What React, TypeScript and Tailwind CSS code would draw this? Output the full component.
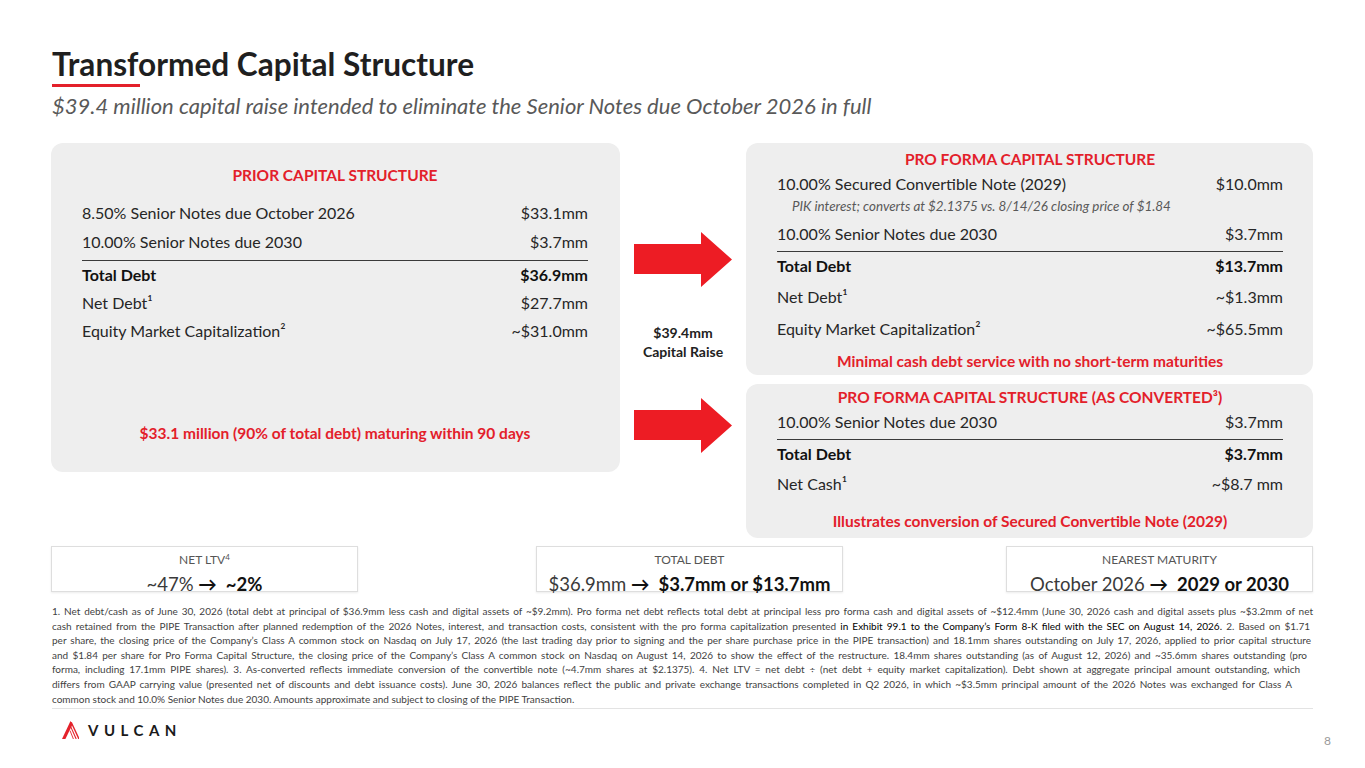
import React from 'react'

const RED = 'text-[#e3202a]'

function Arrow() {
  return (
    <svg width="98" height="55" viewBox="0 0 98 55" className="block">
      <polygon points="0,12 67,12 67,0 98,27.5 67,55 67,42 0,42" fill="#ed1c24" />
    </svg>
  )
}

function Row({ label, value, h, bold }: { label: React.ReactNode; value: string; h: string; bold?: boolean }) {
  return (
    <div className={`flex items-center justify-between ${h} ${bold ? 'font-bold text-[#111]' : 'text-[#262626]'}`}>
      <span>{label}</span>
      <span>{value}</span>
    </div>
  )
}

function Divider() {
  return <div className="mt-[4px] border-t-[1.5px] border-[#3a3a3a]" />
}

function StatBox({ label, from, to, className = '' }: { label: React.ReactNode; from: string; to: string; className?: string }) {
  return (
    <div className={`w-[307px] h-[46px] border border-[#dedede] bg-white shadow-[0_1px_2px_rgba(0,0,0,0.08)] pt-[5px] text-center ${className}`}>
      <div className="text-[12px] leading-[15px] text-[#555]">{label}</div>
      <div className="mt-[6px] text-[18.5px] leading-[22px] text-[#3a3a3a]">
        {from} <span className="font-bold text-[#111]">&rarr;&nbsp; {to}</span>
      </div>
    </div>
  )
}

function Logo() {
  return (
    <div className="flex items-center gap-[9px] pl-[10px] h-[18px]">
      <svg width="17" height="18" viewBox="0 0 17 18">
        <polygon points="8.5,0 10.5,3.4 3.4,18 0,18" fill="#e4222b" />
        <line x1="9.2" y1="1.2" x2="17" y2="18" stroke="#e4222b" strokeWidth="1.4" />
        <line x1="8.6" y1="5.4" x2="14.2" y2="18" stroke="#e4222b" strokeWidth="1.1" />
        <line x1="8" y1="9.6" x2="11.4" y2="18" stroke="#e4222b" strokeWidth="0.9" />
      </svg>
      <span className="text-[15px] font-bold tracking-[5.5px] text-[#1a1a1a] leading-[18px]">VULCAN</span>
    </div>
  )
}

export default function App() {
  return (
    <div className="w-[1365px] h-[768px] overflow-hidden bg-white px-[52px] pt-[46px] font-[family-name:Lato,sans-serif]">
      {/* title */}
      <h1 className="text-[31.6px] leading-[36px] font-bold text-[#1f1f1f]">Transformed Capital Structure</h1>
      <div className="mt-[2px] h-[3px] w-[88px] bg-[#e3202a]" />
      <p className="mt-[6px] text-[22px] leading-[26px] italic text-[#595959]">
        $39.4 million capital raise intended to eliminate the Senior Notes due October 2026 in full
      </p>

      {/* panels */}
      <div className="mt-[24px] -ml-[1px] flex h-[395px] text-[16px]">
        <div className="w-[569px] h-[329px] rounded-xl bg-[#eeeeee] pl-[31px] pr-[32px] pt-[20px] flex flex-col">
          <div className={`h-[24px] leading-[24px] text-center font-bold text-[15.5px] ${RED}`}>PRIOR CAPITAL STRUCTURE</div>
          <div className="mt-[11px]">
            <Row h="h-[29px]" label="8.50% Senior Notes due October 2026" value="$33.1mm" />
            <Row h="h-[29px]" label="10.00% Senior Notes due 2030" value="$3.7mm" />
          </div>
          <Divider />
          <Row h="h-[28px]" bold label="Total Debt" value="$36.9mm" />
          <Row h="h-[28px]" label="Net Debt¹" value="$27.7mm" />
          <Row h="h-[28px]" label="Equity Market Capitalization²" value="~$31.0mm" />
          <div className={`mt-auto mb-[29px] leading-[20px] text-center font-bold text-[15.5px] ${RED}`}>
            $33.1 million (90% of total debt) maturing within 90 days
          </div>
        </div>

        <div className="w-[126px] flex flex-col items-center pt-[89px]">
          <Arrow />
          <div className="mt-[36px] text-center text-[14px] leading-[19px] font-bold text-[#222]">
            <div>$39.4mm</div>
            <div>Capital Raise</div>
          </div>
          <div className="mt-[37px]">
            <Arrow />
          </div>
        </div>

        <div className="w-[567px] flex flex-col gap-[9px]">
          <div className="h-[232px] rounded-xl bg-[#eeeeee] pl-[31px] pr-[30px] pt-[4px] flex flex-col">
            <div className={`h-[24px] leading-[24px] text-center font-bold text-[15.5px] ${RED}`}>PRO FORMA CAPITAL STRUCTURE</div>
            <Row h="h-[26px]" label="10.00% Secured Convertible Note (2029)" value="$10.0mm" />
            <div className="h-[18px] leading-[18px] pl-[15px] italic text-[13.4px] text-[#595959]">
              PIK interest; converts at $2.1375 vs. 8/14/26 closing price of $1.84
            </div>
            <div className="mt-[6px]">
              <Row h="h-[26px]" label="10.00% Senior Notes due 2030" value="$3.7mm" />
            </div>
            <Divider />
            <Row h="h-[28px]" bold label="Total Debt" value="$13.7mm" />
            <Row h="h-[33px]" label="Net Debt¹" value="~$1.3mm" />
            <Row h="h-[32px]" label="Equity Market Capitalization²" value="~$65.5mm" />
            <div className={`mt-[6px] leading-[20px] text-center font-bold text-[15.5px] ${RED}`}>
              Minimal cash debt service with no short-term maturities
            </div>
          </div>

          <div className="h-[154px] rounded-xl bg-[#eeeeee] pl-[31px] pr-[30px] pt-[1px] flex flex-col">
            <div className={`h-[24px] leading-[24px] text-center font-bold text-[15.5px] ${RED}`}>
              PRO FORMA CAPITAL STRUCTURE (AS CONVERTED³)
            </div>
            <Row h="h-[26px]" label="10.00% Senior Notes due 2030" value="$3.7mm" />
            <Divider />
            <Row h="h-[28px]" bold label="Total Debt" value="$3.7mm" />
            <Row h="h-[32px]" label="Net Cash¹" value="~$8.7 mm" />
            <div className={`mt-[11px] leading-[20px] text-center font-bold text-[15.5px] ${RED}`}>
              Illustrates conversion of Secured Convertible Note (2029)
            </div>
          </div>
        </div>
      </div>

      {/* stats */}
      <div className="mt-[8px] -ml-[1px] flex">
        <StatBox
          label={<>NET LTV<sup className="text-[8px]">4</sup></>}
          from="~47%"
          to="~2%"
        />
        <StatBox className="ml-[178px]" label="TOTAL DEBT" from="$36.9mm" to="$3.7mm or $13.7mm" />
        <StatBox className="ml-[163px]" label="NEAREST MATURITY" from="October 2026" to="2029 or 2030" />
      </div>

      {/* footnotes */}
      <div className="mt-[12px] text-[10px] leading-[14.6px] text-[#3f3f3f]">
        <div className="w-[1261px] text-justify [text-align-last:justify]">
          1. Net debt/cash as of June 30, 2026 (total debt at principal of $36.9mm less cash and digital assets of ~$9.2mm). Pro forma net debt reflects total debt at principal less pro forma cash and digital assets of ~$12.4mm (June 30, 2026 cash and digital assets plus ~$3.2mm of net
        </div>
        <div className="w-[1258px] text-justify [text-align-last:justify]">
          cash retained from the PIPE Transaction after planned redemption of the 2026 Notes, interest, and transaction costs, consistent with the pro forma capitalization presented{' '}
          <span className="text-black">in Exhibit 99.1 to the Company’s Form 8-K filed with the SEC on August 14, 2026.</span>
          {'  '}2. Based on $1.71
        </div>
        <div className="w-[1259px] text-justify [text-align-last:justify]">
          per share, the closing price of the Company’s Class A common stock on Nasdaq on July 17, 2026 (the last trading day prior to signing and the per share purchase price in the PIPE transaction) and 18.1mm shares outstanding on July 17, 2026, applied to prior capital structure
        </div>
        <div className="w-[1255px] text-justify [text-align-last:justify]">
          and $1.84 per share for Pro Forma Capital Structure, the closing price of the Company’s Class A common stock on Nasdaq on August 14, 2026 to show the effect of the restructure. 18.4mm shares outstanding (as of August 12, 2026) and ~35.6mm shares outstanding (pro
        </div>
        <div className="w-[1248px] text-justify [text-align-last:justify]">
          forma, including 17.1mm PIPE shares). 3. As-converted reflects immediate conversion of the convertible note (~4.7mm shares at $2.1375). 4. Net LTV = net debt ÷ (net debt + equity market capitalization). Debt shown at aggregate principal amount outstanding, which
        </div>
        <div className="w-[1240px] text-justify [text-align-last:justify]">
          differs from GAAP carrying value (presented net of discounts and debt issuance costs). June 30, 2026 balances reflect the public and private exchange transactions completed in Q2 2026, in which ~$3.5mm principal amount of the 2026 Notes was exchanged for Class A
        </div>
        <div>common stock and 10.0% Senior Notes due 2030. Amounts approximate and subject to closing of the PIPE Transaction.</div>
      </div>
      <div className="mt-[2px] border-t border-[#e3e3e3]" />

      {/* footer */}
      <div className="mt-[12px] flex items-start justify-between">
        <Logo />
        <span className="-mr-[18px] mt-[13px] text-[12px] leading-[14px] text-[#9a9a9a]">8</span>
      </div>
    </div>
  )
}
